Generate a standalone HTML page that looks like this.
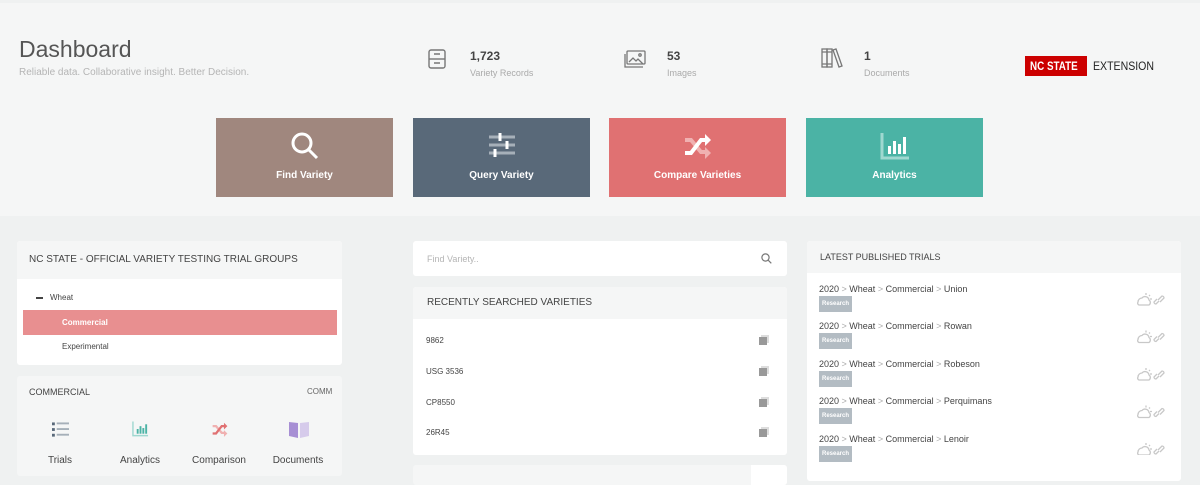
<!DOCTYPE html>
<html><head><style>
*{margin:0;padding:0;box-sizing:border-box}
body{width:1200px;height:473px;overflow:hidden;background:#eff1f1;font-family:"Liberation Sans",sans-serif;color:#555;position:relative}
.top{position:absolute;left:0;top:3px;width:1200px;height:213px;background:#f5f6f6}
.abs{position:absolute}
h1{position:absolute;left:19px;top:36px;font-size:23px;font-weight:normal;color:#555}
.sub{left:19px;top:67px;font-size:10px;color:#b5b5b5}
.stat b{display:block;font-size:12px;color:#444;font-weight:bold}
.stat span{font-size:9px;color:#aaa}
.tile{position:absolute;top:118px;width:177px;height:79px;color:#fff;font-size:10px;font-weight:bold;text-align:center}
.tile div{position:absolute;left:0;right:0;top:52px}
.tile svg{position:absolute;left:74px;top:13px}
.card{position:absolute;background:#fff;border-radius:3px;overflow:hidden}
.hd{background:#f5f6f6;font-size:10px;color:#444;padding-left:14px}
.row{font-size:9px;color:#444}
.tag{display:inline-block;background:#b3bcc3;color:#fff;font-size:6px;font-weight:bold;padding:2px 3px;margin-top:1px}
.tr{position:absolute;left:12px;font-size:9px;color:#444;line-height:12px}
.tr i{font-style:normal;color:#aaa}
.lab{position:absolute;top:79px;width:80px;text-align:center;font-size:10px;color:#444}
</style></head><body>
<div class="top"></div>
<h1>Dashboard</h1>
<div class="abs sub">Reliable data. Collaborative insight. Better Decision.</div>

<svg class="abs" style="left:428px;top:49px" width="18" height="20" viewBox="0 0 18 20" fill="none" stroke="#777" stroke-width="1.4"><rect x="1" y="1" width="16" height="18" rx="2"/><line x1="1" y1="10" x2="17" y2="10"/><path d="M6 5h6M6 14h6"/></svg>
<div class="abs stat" style="left:470px;top:49px"><b>1,723</b><span>Variety Records</span></div>
<svg class="abs" style="left:624px;top:50px" width="22" height="18" viewBox="0 0 22 18" fill="none" stroke="#777" stroke-width="1.3"><rect x="3" y="1" width="18" height="13" rx="1"/><path d="M1 4v13h18"/><path d="M5 12l4-4 3 3 2-2 5 5"/><circle cx="16" cy="5" r="1.2"/></svg>
<div class="abs stat" style="left:667px;top:49px"><b>53</b><span>Images</span></div>
<svg class="abs" style="left:821px;top:48px" width="22" height="21" viewBox="0 0 22 21" fill="none" stroke="#777" stroke-width="1.3"><rect x="1" y="1" width="5" height="18"/><rect x="6" y="1" width="5" height="18"/><path d="M12 2l3-1 6 17-3 1z"/><path d="M1 4h10M1 16h10"/></svg>
<div class="abs stat" style="left:864px;top:49px"><b>1</b><span>Documents</span></div>
<div class="abs" style="left:1025px;top:56px;width:62px;height:20px;background:#cc0000;color:#fff;font-size:12px;font-weight:bold;line-height:20px;overflow:hidden"><span style="display:inline-block;transform:scaleX(0.82);transform-origin:0 0;margin-left:5px;white-space:nowrap">NC STATE</span></div>
<div class="abs" style="left:1093px;top:56px;line-height:20px;font-size:12px;color:#222;transform:scaleX(0.88);transform-origin:0 0">EXTENSION</div>

<div class="tile" style="left:216px;background:#a0877e"><svg width="30" height="30" viewBox="0 0 30 30" fill="none" stroke="#fff" stroke-width="3"><circle cx="12" cy="12" r="9"/><path d="M19 19l8 8"/></svg><div>Find Variety</div></div>
<div class="tile" style="left:413px;background:#596979"><svg width="30" height="30" viewBox="0 0 30 30" stroke-width="3"><path d="M2 6h26M2 14h26M2 22h26" stroke="#a6b0b9"/><path d="M13 2v8M20 10v8M8 18v8" stroke="#fff"/></svg><div>Query Variety</div></div>
<div class="tile" style="left:609px;background:#e07172"><svg width="30" height="30" viewBox="0 0 30 30" fill="none" stroke-width="4"><path d="M2 9h6l10 12h5" stroke="#f0b1b1"/><path d="M2 22h6l10-13h5" stroke="#fff"/><path d="M22 3l6 6-6 6z" fill="#fff" stroke="none"/><path d="M22 16l6 6-6 6z" fill="#f0b1b1" stroke="none"/></svg><div>Compare Varieties</div></div>
<div class="tile" style="left:806px;background:#4bb3a5"><svg width="30" height="30" viewBox="0 0 30 30" fill="none"><path d="M2 2v25h27" stroke="#9fd8d0" stroke-width="3"/><rect x="8" y="15" width="3" height="8" fill="#fff"/><rect x="13" y="10" width="3" height="13" fill="#fff"/><rect x="18" y="13" width="3" height="10" fill="#fff"/><rect x="23" y="6" width="3" height="17" fill="#fff"/></svg><div>Analytics</div></div>

<div class="card" style="left:17px;top:241px;width:325px;height:124px">
 <div class="hd" style="height:38px;line-height:38px;padding-left:12px">NC STATE - OFFICIAL VARIETY TESTING TRIAL GROUPS</div>
 <div class="abs row" style="left:19px;top:52px;font-size:8px"><span style="display:inline-block;width:7px;height:2px;background:#444;vertical-align:middle;margin-right:7px"></span>Wheat</div>
 <div class="abs" style="left:6px;top:69px;width:314px;height:25px;background:#e88f90;color:#fff;font-size:8px;font-weight:bold;line-height:25px;padding-left:39px">Commercial</div>
 <div class="abs row" style="left:45px;top:101px;font-size:8px">Experimental</div>
</div>
<div class="card" style="left:17px;top:376px;width:325px;height:100px;background:#f5f6f6">
 <div class="abs" style="left:12px;top:11px;font-size:9px;color:#444">COMMERCIAL</div>
 <div class="abs" style="left:290px;top:11px;width:24px;text-align:right;font-size:8px;color:#666">COMM</div>
 <svg class="abs" style="left:35px;top:46px" width="17" height="16" viewBox="0 0 18 16"><g fill="#59697a"><rect x="0" y="0" width="3" height="3"/><rect x="0" y="6" width="3" height="3"/><rect x="0" y="12" width="3" height="3"/></g><g fill="#a6b0b9"><rect x="5" y="0" width="13" height="2"/><rect x="5" y="6" width="13" height="2"/><rect x="5" y="12" width="13" height="2"/></g></svg>
 <svg class="abs" style="left:115px;top:45px" width="17" height="16" viewBox="0 0 18 16"><path d="M1 0v15h16" stroke="#9fd8d0" stroke-width="1.5" fill="none"/><g fill="#4bb3a5"><rect x="5" y="8" width="2" height="5"/><rect x="8" y="5" width="2" height="8"/><rect x="11" y="7" width="2" height="6"/><rect x="14" y="3" width="2" height="10"/></g></svg>
 <svg class="abs" style="left:194px;top:45px" width="18" height="17" viewBox="0 0 30 30" fill="none" stroke-width="4"><path d="M2 9h6l10 12h5" stroke="#f0b1b1"/><path d="M2 22h6l10-13h5" stroke="#e07172"/><path d="M22 3l6 6-6 6z" fill="#e07172" stroke="none"/><path d="M22 16l6 6-6 6z" fill="#f0b1b1" stroke="none"/></svg>
 <svg class="abs" style="left:272px;top:45px" width="20" height="17" viewBox="0 0 20 17"><path d="M0 1l9 1v15L0 15z" fill="#a78fd4"/><path d="M11 2l9-1v14l-9 2z" fill="#d6cbeb"/></svg>
 <div class="lab" style="left:3px">Trials</div>
 <div class="lab" style="left:83px">Analytics</div>
 <div class="lab" style="left:162px">Comparison</div>
 <div class="lab" style="left:241px">Documents</div>
</div>

<div class="card" style="left:413px;top:241px;width:374px;height:35px">
 <div class="abs" style="left:14px;top:13px;font-size:9px;color:#b5b5b5">Find Variety..</div>
 <svg class="abs" style="left:348px;top:12px" width="11" height="11" viewBox="0 0 11 11" fill="none" stroke="#777" stroke-width="1.2"><circle cx="4.5" cy="4.5" r="3.6"/><path d="M7.3 7.3l3 3"/></svg>
</div>
<div class="card" style="left:413px;top:287px;width:374px;height:168px">
 <div class="hd" style="height:32px;line-height:32px">RECENTLY SEARCHED VARIETIES</div>
 <div class="abs row" style="left:13px;top:49px;font-size:8px">9862</div>
 <div class="abs row" style="left:13px;top:80px;font-size:8px">USG 3536</div>
 <div class="abs row" style="left:13px;top:111px;font-size:8px">CP8550</div>
 <div class="abs row" style="left:13px;top:141px;font-size:8px">26R45</div>
 <div class="abs" style="left:346px;top:50px;width:8px;height:8px;background:#999;box-shadow:2px -2px 0 #ddd"></div>
 <div class="abs" style="left:346px;top:81px;width:8px;height:8px;background:#999;box-shadow:2px -2px 0 #ddd"></div>
 <div class="abs" style="left:346px;top:112px;width:8px;height:8px;background:#999;box-shadow:2px -2px 0 #ddd"></div>
 <div class="abs" style="left:346px;top:142px;width:8px;height:8px;background:#999;box-shadow:2px -2px 0 #ddd"></div>
</div>
<div class="card" style="left:413px;top:465px;width:374px;height:20px;background:#f5f6f6"><div class="abs" style="left:338px;top:0;width:36px;height:20px;background:#fff"></div></div>

<div class="card" style="left:807px;top:241px;width:374px;height:240px">
 <div class="hd" style="height:32px;line-height:32px;padding-left:13px;font-size:9px">LATEST PUBLISHED TRIALS</div>
 <div class="tr" style="top:42px">2020 <i>&gt;</i> Wheat <i>&gt;</i> Commercial <i>&gt;</i> Union<br><span class="tag">Research</span></div>
 <div class="tr" style="top:79px">2020 <i>&gt;</i> Wheat <i>&gt;</i> Commercial <i>&gt;</i> Rowan<br><span class="tag">Research</span></div>
 <div class="tr" style="top:117px">2020 <i>&gt;</i> Wheat <i>&gt;</i> Commercial <i>&gt;</i> Robeson<br><span class="tag">Research</span></div>
 <div class="tr" style="top:154px">2020 <i>&gt;</i> Wheat <i>&gt;</i> Commercial <i>&gt;</i> Perquimans<br><span class="tag">Research</span></div>
 <div class="tr" style="top:192px">2020 <i>&gt;</i> Wheat <i>&gt;</i> Commercial <i>&gt;</i> Lenoir<br><span class="tag">Research</span></div>
 <svg class="abs" style="left:328px;top:49px" width="32" height="165" viewBox="0 0 32 165" fill="none" stroke="#c8c8c8" stroke-width="1.3">
  <g id="ic"><path d="M3 12a4 4 0 0 1 4-4 4 4 0 0 1 7 2 3 3 0 0 1 0 5H4a2 2 0 0 1-1-3z"/><path d="M11 3v2M15 5l-1 1M17 9h-2"/><path d="M23 10l4-4a2 2 0 0 1 2 2l-4 4M24 11l-3 3a2 2 0 0 1-2-2l3-3"/></g>
  <use href="#ic" y="37.5"/><use href="#ic" y="75"/><use href="#ic" y="112.5"/><use href="#ic" y="150"/>
 </svg>
</div>
</body></html>
